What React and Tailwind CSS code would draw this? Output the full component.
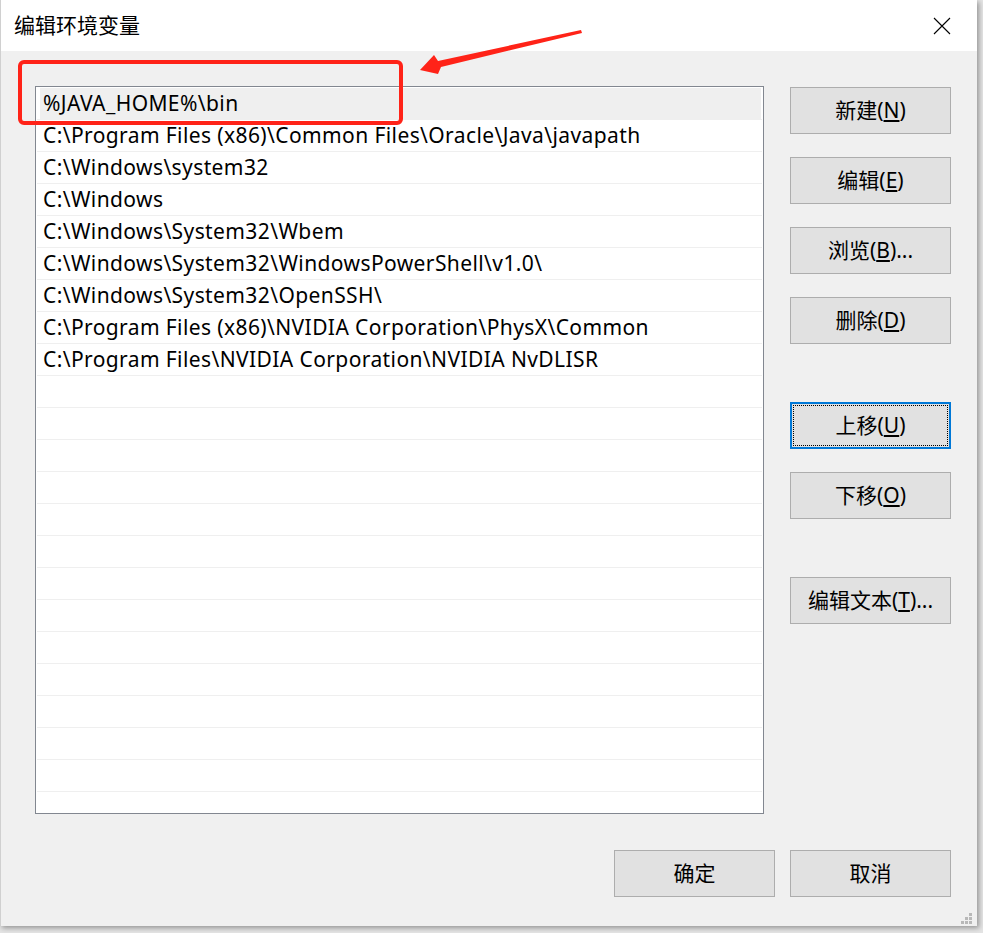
const rows = [
  "%JAVA_HOME%\\bin",
  "C:\\Program Files (x86)\\Common Files\\Oracle\\Java\\javapath",
  "C:\\Windows\\system32",
  "C:\\Windows",
  "C:\\Windows\\System32\\Wbem",
  "C:\\Windows\\System32\\WindowsPowerShell\\v1.0\\",
  "C:\\Windows\\System32\\OpenSSH\\",
  "C:\\Program Files (x86)\\NVIDIA Corporation\\PhysX\\Common",
  "C:\\Program Files\\NVIDIA Corporation\\NVIDIA NvDLISR",
];

const font = {
  fontFamily: '"Noto Sans", "Noto Sans CJK SC", sans-serif',
};

function Btn({ label, hot, tail = "", focus = false, className = "" }) {
  return (
    <button
      className={
        "relative flex h-[47px] w-[161px] items-center justify-center bg-[#e1e1e1] text-[21px] leading-none text-black " +
        (focus ? "border-2 border-[#0078d7] " : "border border-[#adadad] ") +
        className
      }
    >
      {focus ? (
        <span className="absolute inset-[1px] border border-dotted border-black" />
      ) : null}
      <span>
        {label}
        {hot ? (
          <>
            (<u>{hot}</u>)
          </>
        ) : null}
        {tail}
      </span>
    </button>
  );
}

export default function App() {
  const filler = Array.from({ length: 22 - rows.length });

  return (
    <div
      className="relative h-[933px] w-[983px] overflow-hidden bg-[#e4e4e4]"
      style={font}
    >
      <div className="flex h-[926px] w-[977px] flex-col border-l border-[#d0d0d0] bg-[#f0f0f0] shadow-[2px_2px_5px_rgba(0,0,0,0.35)]">
        <div className="flex h-[51px] items-center justify-between bg-white pl-[13px] pr-[26px]">
          <div className="text-[21px] text-black">编辑环境变量</div>
          <svg width="18" height="18" viewBox="0 0 18 18">
            <path d="M1 1 L17 17 M17 1 L1 17" stroke="#000" strokeWidth="1.1" />
          </svg>
        </div>

        <div className="flex pl-[34px] pt-[35px]">
          <div className="h-[728px] w-[729px] border border-[#828790] bg-white pt-[1px]">
            {rows.map((r, i) => (
              <div key={r} className="flex h-[32px] flex-col">
                <div
                  className={
                    "flex h-[31px] items-center text-[21px] tracking-[0.4px] text-black " +
                    (i === 0
                      ? "ml-[4px] mr-[2px] bg-[#efefef] pl-[3px]"
                      : "pl-[7px]")
                  }
                >
                  {r}
                </div>
                <div className="mx-[1px] h-[1px] bg-[#efefef]" />
              </div>
            ))}
            {filler.map((_, i) => (
              <div key={i} className="flex h-[32px] flex-col justify-end">
                <div className="mx-[1px] h-[1px] bg-[#efefef]" />
              </div>
            ))}
          </div>

          <div className="ml-[26px] mt-[1px] flex flex-col">
            <Btn label="新建" hot="N" />
            <Btn label="编辑" hot="E" className="mt-[23px]" />
            <Btn label="浏览" hot="B" tail="..." className="mt-[23px]" />
            <Btn label="删除" hot="D" className="mt-[23px]" />
            <Btn label="上移" hot="U" focus className="mt-[58px]" />
            <Btn label="下移" hot="O" className="mt-[23px]" />
            <Btn label="编辑文本" hot="T" tail="..." className="mt-[58px]" />
          </div>
        </div>

        <div className="mt-[36px] flex justify-end gap-[15px] pr-[26px]">
          <Btn label="确定" />
          <Btn label="取消" />
        </div>
      </div>

      <svg
        className="pointer-events-none absolute left-0 top-0"
        width="983"
        height="933"
      >
        <rect
          x="20"
          y="62"
          width="381"
          height="61"
          rx="4"
          fill="none"
          stroke="#ff2318"
          strokeWidth="4"
        />
        <polygon
          points="420,70 434,55 438,61 581,30 582,33 441,67 438,74"
          fill="#ff2318"
        />
        <g fill="#b8b8b8">
          <rect x="969" y="913" width="3" height="3" />
          <rect x="965" y="917" width="3" height="3" />
          <rect x="969" y="917" width="3" height="3" />
          <rect x="961" y="921" width="3" height="3" />
          <rect x="965" y="921" width="3" height="3" />
          <rect x="969" y="921" width="3" height="3" />
        </g>
      </svg>
    </div>
  );
}
